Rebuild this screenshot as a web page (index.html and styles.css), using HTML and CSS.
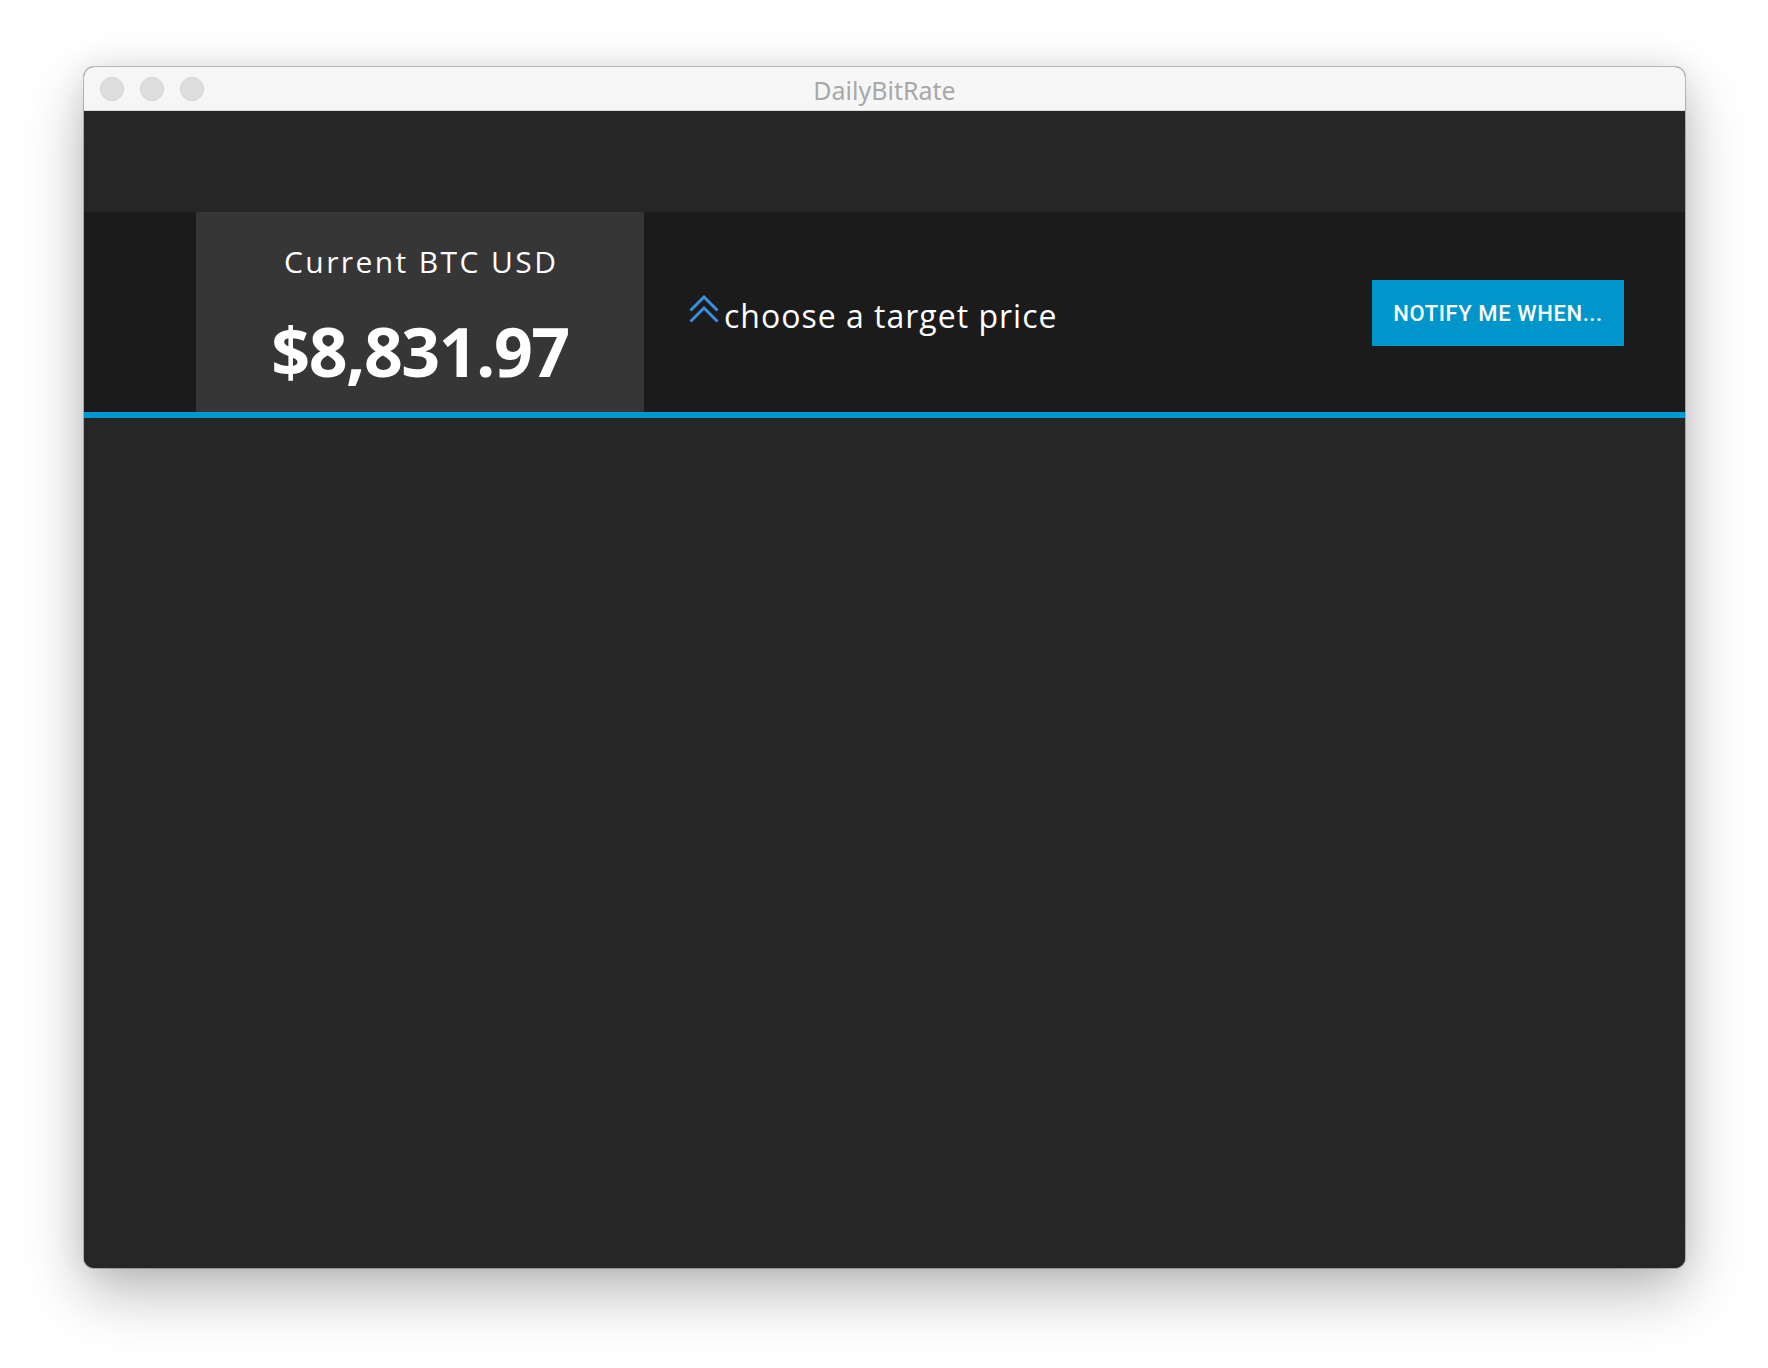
FILE: index.html
```html
<!DOCTYPE html>
<html>
<head>
<meta charset="utf-8">
<link rel="stylesheet" href="styles.css">
</head>
<body>
<div class="stage">
  <div class="window">
    <div class="titlebar">
      <div class="lights">
        <span class="light"></span>
        <span class="light"></span>
        <span class="light"></span>
      </div>
      <div class="title">DailyBitRate</div>
    </div>
    <div class="content">
      <div class="spacer"></div>
      <div class="band">
        <div class="card">
          <div class="card-label">Current BTC USD</div>
          <div class="card-price">$8,831.97</div>
        </div>
        <div class="target">
          <svg class="chev" width="30" height="28" viewBox="0 0 30 28">
            <polyline points="1.5,15.5 15,2 28.5,15.5" fill="none" stroke="#3c8de0" stroke-width="3"/>
            <polyline points="1.5,26.5 15,13 28.5,26.5" fill="none" stroke="#3c8de0" stroke-width="3"/>
          </svg>
          <span class="target-text">choose a target price</span>
        </div>
        <button class="notify">NOTIFY ME WHEN...</button>
      </div>
    </div>
  </div>
</div>
</body>
</html>
```

FILE: styles.css
```css
html, body {
  margin: 0;
  padding: 0;
  background: #ffffff;
}
.stage {
  padding: 67px 0 0 84px;
  width: 1768px;
  height: 1368px;
  box-sizing: border-box;
}
.window {
  width: 1601px;
  height: 1201px;
  border-radius: 10px;
  overflow: hidden;
  display: flex;
  flex-direction: column;
  box-shadow: 0 0 0 1px rgba(0,0,0,0.22), 0 24px 60px rgba(0,0,0,0.28), 0 0 30px rgba(0,0,0,0.08);
  background: #262626;
}
.titlebar {
  height: 43px;
  border-bottom: 1px solid #d9d9d9;
  background: #f6f6f6;
  display: flex;
  align-items: center;
  position: relative;
  flex: none;
}
.lights {
  display: flex;
  gap: 16px;
  padding-left: 16px;
}
.light {
  width: 22px;
  height: 22px;
  border-radius: 50%;
  background: #dedede;
  border: 1px solid #d0d0d0;
}
.title {
  position: absolute;
  left: 0;
  right: 0;
  top: 0;
  bottom: 0;
  display: flex;
  align-items: center;
  justify-content: center;
  font-family: "Noto Sans", "Open Sans", sans-serif;
  font-size: 25px;
  color: #a8a8a8;
  padding-top: 2px;
}
.content {
  flex: 1;
  background: #262626;
  display: flex;
  flex-direction: column;
}
.spacer {
  height: 101px;
  flex: none;
}
.band {
  height: 200px;
  background: #1b1b1b;
  border-bottom: 6px solid #0098d2;
  display: flex;
  align-items: center;
  padding: 0 61px 0 112px;
  flex: none;
}
.card {
  width: 448px;
  height: 200px;
  background: #363636;
  display: flex;
  flex-direction: column;
  align-items: center;
  font-family: "Open Sans", "Noto Sans", sans-serif;
  color: #ffffff;
  flex: none;
}
.card-label {
  font-size: 30px;
  margin-top: 30px;
  line-height: 40px;
  letter-spacing: 2.4px;
  margin-right: -2.4px;
}
.card-price {
  font-size: 68px;
  font-weight: 700;
  line-height: 80px;
  margin-top: 29px;
  letter-spacing: -1.5px;
}
.target {
  display: flex;
  align-items: center;
  margin-left: 45px;
  flex: 1;
  padding-top: 6px;
}
.chev {
  flex: none;
  margin-top: -12px;
  margin-right: 5px;
}
.target-text {
  font-family: "Open Sans", "Noto Sans", sans-serif;
  font-size: 32px;
  color: #ffffff;
  letter-spacing: 1px;
}
.notify {
  width: 252px;
  height: 66px;
  background: #0096cc;
  border: none;
  color: #ffffff;
  font-family: Roboto, "Liberation Sans", sans-serif;
  font-weight: 500;
  font-size: 22px;
  letter-spacing: 0.6px;
  padding: 0;
  margin-top: 2px;
  flex: none;
}
```
